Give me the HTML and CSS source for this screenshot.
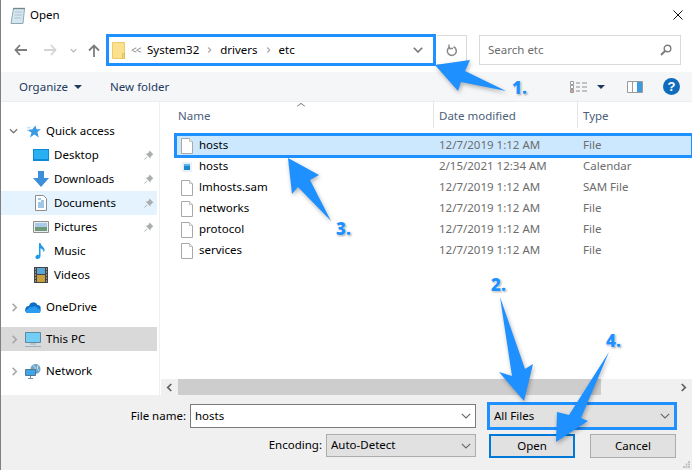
FILE: index.html
```html
<!DOCTYPE html>
<html lang="en">
<head>
  <meta charset="UTF-8">
  <title>Open</title>
  <link rel="stylesheet" href="styles.css">
</head>
<body>
  <svg class="defs" width="0" height="0">
    <symbol id="file" viewBox="0 0 12 16">
      <path d="M.5.5h8l3 3v12H.5z" fill="#fff" stroke="#a8a8a8"/>
      <path d="M8.5.5v3h3" fill="#f0f0f0" stroke="#c4c4c4"/>
    </symbol>
    <symbol id="pin" viewBox="0 0 10 10">
      <path d="M5.5.5l4 4-1.200.6-1.600 1.600-.3 1.800L1.700 3.800l1.800-.3L5 2z" fill="#a9adb0"/>
      <path d="M3 6.800L.5 9.500" stroke="#a9adb0" fill="none"/>
    </symbol>
    <symbol id="chev-right" viewBox="0 0 8 10">
      <path d="M2 1l4 4-4 4" fill="none" stroke="#a6a6a6" stroke-width="1.700"/>
    </symbol>
    <symbol id="chev-down" viewBox="0 0 10 6">
      <path d="M.8.8L5 5l4.200-4.200" fill="none" stroke="#666" stroke-width="1.100"/>
    </symbol>
  </svg>

  <div class="dialog">
    <header class="titlebar">
      <svg class="app-icon" width="16" height="17" viewBox="0 0 16 17">
        <path d="M3.500 1.500h11l-1.500 15H1z" fill="#d5e6ee" stroke="#8ea7b3"/>
        <path d="M5 5h7M4.700 8h7M4.400 11h7" stroke="#a9c4d2"/>
        <path d="M3.500 1.500h11" stroke="#59636b" stroke-width="1.500" stroke-dasharray="1 1"/>
      </svg>
      <span class="title">Open</span>
      <svg class="close" width="10" height="10" viewBox="0 0 10 10">
        <path d="M.5.500l9 9M9.500.500l-9 9" stroke="#111" fill="none"/>
      </svg>
    </header>

    <nav class="navbar">
      <svg class="nav-back" width="13" height="12" viewBox="0 0 13 12">
        <path d="M6 1L1.500 6 6 11M2 6h11" fill="none" stroke="#7d7d7d" stroke-width="1.800"/>
      </svg>
      <svg class="nav-forward" width="13" height="12" viewBox="0 0 13 12">
        <path d="M7 1l4.500 5L7 11M11 6H0" fill="none" stroke="#d4d4d4" stroke-width="1.800"/>
      </svg>
      <svg class="nav-recent" width="7" height="5" viewBox="0 0 10 6">
        <path d="M1 1l4 4 4-4" fill="none" stroke="#b5b5b5" stroke-width="1.800"/>
      </svg>
      <svg class="nav-up" width="12" height="13" viewBox="0 0 12 13">
        <path d="M1 6.500L6 1.500l5 5M6 2v11" fill="none" stroke="#7d7d7d" stroke-width="1.800"/>
      </svg>
      <div class="address marked">
        <svg width="13" height="17" viewBox="0 0 13 17">
          <path d="M.5.500h12v16H.5z" fill="#fbe08f" stroke="#eccb6d"/>
          <path d="M10.500 11.500h2v5h-2z" fill="#f7d878" stroke="#e3bd58"/>
        </svg>
        <span class="crumb-more">&lt;&lt;</span>
        <span class="crumb crumb-first">System32</span>
        <svg class="crumb-sep" width="5" height="8" viewBox="0 0 8 10"><use href="#chev-right"/></svg>
        <span class="crumb">drivers</span>
        <svg class="crumb-sep" width="5" height="8" viewBox="0 0 8 10"><use href="#chev-right"/></svg>
        <span class="crumb">etc</span>
        <svg class="address-drop" width="10" height="6" viewBox="0 0 10 6">
          <path d="M.8.800L5 5l4.200-4.200" fill="none" stroke="#777" stroke-width="1.600"/>
        </svg>
      </div>
      <div class="refresh">
        <svg width="12" height="13" viewBox="0 0 12 13">
          <path d="M7.500 2.800a4.500 4.500 0 1 1-3.600.1" fill="none" stroke="#8a8a8a" stroke-width="1.500"/>
          <path d="M3 .5v4h4" fill="none" stroke="#8a8a8a" stroke-width="1.300"/>
        </svg>
      </div>
      <div class="search">
        <span>Search etc</span>
        <svg width="12" height="12" viewBox="0 0 12 12">
          <circle cx="7.500" cy="4.500" r="3.300" fill="none" stroke="#7d7d7d" stroke-width="1.400"/>
          <path d="M5 7L1 11" stroke="#7d7d7d" stroke-width="2"/>
        </svg>
      </div>
    </nav>

    <div class="toolbar">
      <span class="tool">Organize</span>
      <span class="caret"></span>
      <span class="tool tool-new">New folder</span>
      <svg class="tool-views" width="19" height="12" viewBox="0 0 19 12">
        <path d="M.5.500h3v3h-3zM.5 4.500h3v3h-3zM.5 8.500h3v3h-3z" fill="#fff" stroke="#9a9a9a"/>
        <path d="M1 10h2" stroke="#c8402f"/>
        <path d="M6 2h4M12 2h5M6 6h4M12 6h5M6 10h4M12 10h5" stroke="#8f8f8f"/>
      </svg>
      <span class="caret caret-views"></span>
      <svg class="tool-pane" width="16" height="12" viewBox="0 0 16 12">
        <path d="M.5.500h15v11H.5z" fill="#fff" stroke="#9a9a9a"/>
        <path d="M5.500 1v10" stroke="#9a9a9a"/>
        <path d="M10 1h5v10h-5z" fill="#3c9be0"/>
      </svg>
      <svg class="tool-help" width="17" height="17" viewBox="0 0 17 17">
        <circle cx="8.500" cy="8.500" r="8.500" fill="#0f6cbd"/>
        <text x="8.500" y="13" class="help-mark">?</text>
      </svg>
    </div>

    <div class="main">
      <aside class="sidebar">
        <div class="side-row side-head">
          <svg class="expander" width="9" height="6" viewBox="0 0 10 6">
            <path d="M1 1l4 4 4-4" fill="none" stroke="#7a7a7a" stroke-width="1.500"/>
          </svg>
          <svg class="head-icon" width="14" height="13" viewBox="0 0 15 14">
            <path d="M9 .5l1.300 4.200H15l-3.800 2.900 1.400 5.900L8 10.300 3.200 13.500l1.600-5.400L0 5.500l5.800-.8z" fill="#3a9be4"/>
            <path d="M0 3h4M0 6h2" stroke="#9fd0f2"/>
          </svg>
          <span>Quick access</span>
        </div>
        <div class="side-row side-child">
          <svg width="16" height="12" viewBox="0 0 16 12">
            <path d="M0 0h16v12H0z" fill="#0c8ad8"/>
            <path d="M1 1h14v9H1z" fill="#29b0f2"/>
          </svg>
          <span>Desktop</span>
          <svg class="pin" width="10" height="10"><use href="#pin"/></svg>
        </div>
        <div class="side-row side-child">
          <svg width="16" height="16" viewBox="0 0 16 16">
            <path d="M5 0h6v7h5l-8 9-8-9h5z" fill="#3d8fdb"/>
          </svg>
          <span>Downloads</span>
          <svg class="pin" width="10" height="10"><use href="#pin"/></svg>
        </div>
        <div class="side-row side-child is-hover">
          <svg width="16" height="16" viewBox="0 0 16 16">
            <path d="M2.500.500h8l3 3v12h-11z" fill="#fff" stroke="#8c8c8c"/>
            <path d="M5 4h3M8 6h3M5 8h6M5 10h6M5 12h6" stroke="#3f8fd0"/>
          </svg>
          <span>Documents</span>
          <svg class="pin" width="10" height="10"><use href="#pin"/></svg>
        </div>
        <div class="side-row side-child">
          <svg width="16" height="12" viewBox="0 0 16 12">
            <path d="M.5.500h15v11H.5z" fill="#e8eef0" stroke="#8f8f8f"/>
            <path d="M2 2h12v4H2z" fill="#a9c9e6"/>
            <path d="M2 6h12v4H2z" fill="#6f9a7a"/>
          </svg>
          <span>Pictures</span>
          <svg class="pin" width="10" height="10"><use href="#pin"/></svg>
        </div>
        <div class="side-row side-child">
          <svg width="16" height="16" viewBox="0 0 16 16">
            <path d="M6 0h1.500c.3 3 3.500 3.500 4 6.500.2 1.200-.3 2-1 2.800.2-2.500-1.700-3.500-3-4V13c0 1.700-1.400 3-3.200 3C3 16 2.300 15 2.500 13.800 2.800 12.500 4.500 11.500 6 12z" fill="#1f9be8"/>
          </svg>
          <span>Music</span>
        </div>
        <div class="side-row side-child">
          <svg width="16" height="16" viewBox="0 0 16 16">
            <path d="M1 0h14v16H1z" fill="#444"/>
            <path d="M4 1h8v6H4z" fill="#5aa6d6"/>
            <path d="M4 8h8v7H4z" fill="#c8a13c"/>
            <path d="M2 2h1M2 5h1M2 8h1M2 11h1M2 14h1M13 2h1M13 5h1M13 8h1M13 11h1M13 14h1" stroke="#ddd"/>
          </svg>
          <span>Videos</span>
        </div>
        <div class="side-row side-section">
          <svg class="expander" width="7" height="9" viewBox="0 0 8 10"><use href="#chev-right"/></svg>
          <svg class="head-icon" width="16" height="11" viewBox="0 0 16 11">
            <path d="M4 4a4.500 4.500 0 0 1 8.500-1A3 3 0 0 1 15.500 7 3 3 0 0 1 13 11H3a3 3 0 0 1-2.500-4.500A3 3 0 0 1 4 4z" fill="#0f6fc6"/>
            <path d="M7 5.500a3.500 3.500 0 0 1 6 1.500 2 2 0 0 1 2.500 2A2 2 0 0 1 13 11H3a2 2 0 0 1 0-4 3 3 0 0 1 4-1.500z" fill="#2a9df0"/>
          </svg>
          <span>OneDrive</span>
        </div>
        <div class="side-row side-section is-selected">
          <svg class="expander" width="7" height="9" viewBox="0 0 8 10"><use href="#chev-right"/></svg>
          <svg class="head-icon" width="16" height="15" viewBox="0 0 16 15">
            <path d="M.5.500h15v10H.5z" fill="#74cdf5" stroke="#5f8aa5"/>
            <path d="M5 12h6" stroke="#9db0bd"/>
            <path d="M0 14.500h16" stroke="#9db0bd"/>
          </svg>
          <span>This PC</span>
        </div>
        <div class="side-row side-section">
          <svg class="expander" width="7" height="9" viewBox="0 0 8 10"><use href="#chev-right"/></svg>
          <svg class="head-icon" width="16" height="15" viewBox="0 0 16 15">
            <circle cx="10.500" cy="5" r="5" fill="#6fa5c8"/>
            <path d="M8 1.500c2 1 3 2.500 1 4.500M13 1.500c-1 2-1 4 1 5" stroke="#d6e6ef" fill="none"/>
            <path d="M.5 5.500h10v6H.5z" fill="#3da6e8" stroke="#56768f"/>
            <path d="M5.500 12v2M3 14.500h5" stroke="#7a8c99"/>
          </svg>
          <span>Network</span>
        </div>
      </aside>

      <section class="list">
        <div class="list-head">
          <span class="col col-name">Name<i class="sort-mark"></i></span>
          <span class="col col-date">Date modified</span>
          <span class="col col-type">Type</span>
        </div>
        <div class="list-rows">
          <div class="file-row marked-row">
            <span class="cell-name"><svg width="12" height="16"><use href="#file"/></svg>hosts</span>
            <span class="cell-date">12/7/2019 1:12 AM</span>
            <span class="cell-type">File</span>
          </div>
          <div class="file-row">
            <span class="cell-name">
              <svg width="12" height="16" viewBox="0 0 12 16">
                <path d="M1 3h10v10H1z" fill="#e9f1f6"/>
                <path d="M3 5h6v6H3z" fill="#1b87cf"/>
                <path d="M3 5h6v2H3z" fill="#5db4ea"/>
              </svg>hosts</span>
            <span class="cell-date">2/15/2021 12:34 AM</span>
            <span class="cell-type">Calendar</span>
          </div>
          <div class="file-row">
            <span class="cell-name"><svg width="12" height="16"><use href="#file"/></svg>lmhosts.sam</span>
            <span class="cell-date">12/7/2019 1:12 AM</span>
            <span class="cell-type">SAM File</span>
          </div>
          <div class="file-row">
            <span class="cell-name"><svg width="12" height="16"><use href="#file"/></svg>networks</span>
            <span class="cell-date">12/7/2019 1:12 AM</span>
            <span class="cell-type">File</span>
          </div>
          <div class="file-row">
            <span class="cell-name"><svg width="12" height="16"><use href="#file"/></svg>protocol</span>
            <span class="cell-date">12/7/2019 1:12 AM</span>
            <span class="cell-type">File</span>
          </div>
          <div class="file-row">
            <span class="cell-name"><svg width="12" height="16"><use href="#file"/></svg>services</span>
            <span class="cell-date">12/7/2019 1:12 AM</span>
            <span class="cell-type">File</span>
          </div>
        </div>
        <div class="hscroll">
          <span class="hscroll-btn">
            <svg width="7" height="9" viewBox="0 0 8 10"><path d="M6 1L2 5l4 4" fill="none" stroke="#606060" stroke-width="2"/></svg>
          </span>
          <span class="hscroll-thumb"></span>
          <span class="hscroll-btn hscroll-end">
            <svg width="7" height="9" viewBox="0 0 8 10"><path d="M2 1l4 4-4 4" fill="none" stroke="#606060" stroke-width="2"/></svg>
          </span>
        </div>
      </section>
    </div>

    <footer class="footer">
      <label class="field-label">File name:</label>
      <div class="combo combo-input">
        <span>hosts</span>
        <svg width="10" height="6"><use href="#chev-down"/></svg>
      </div>
      <div class="combo combo-select marked">
        <span>All Files</span>
        <svg width="10" height="6"><use href="#chev-down"/></svg>
      </div>
      <div class="encoding">
        <label class="field-label">Encoding:</label>
        <div class="combo combo-encoding">
          <span>Auto-Detect</span>
          <svg width="10" height="6"><use href="#chev-down"/></svg>
        </div>
      </div>
      <div class="actions">
        <button class="btn btn-default">Open</button>
        <button class="btn">Cancel</button>
      </div>
      <svg class="grip" width="7" height="7" viewBox="0 0 7 7">
        <path d="M5 0h2v2H5zM2.500 2.500h2v2h-2zM5 2.500h2v2H5zM0 5h2v2H0zM2.500 5h2v2h-2zM5 5h2v2H5z" fill="#c4c4c4"/>
      </svg>
    </footer>
  </div>

  <!-- tutorial marks drawn over the dialog -->
  <svg class="marks" width="692" height="470" viewBox="0 0 692 470">
    <path d="M435 65L470 60 465 71 506 91 461 82 458 91z"/>
    <path d="M500 297L525 369 533 364 524 401 499 372 512 376z"/>
    <path d="M288 158L319 175 310 180 331 221 298 187 292 194z"/>
    <path d="M609 352L581 418 588 421 556 442 557 412 569 415z"/>
  </svg>
  <span class="step step-1">1.</span>
  <span class="step step-2">2.</span>
  <span class="step step-3">3.</span>
  <span class="step step-4">4.</span>
</body>
</html>
```

FILE: styles.css
```css
* {
  box-sizing: border-box;
}

body {
  margin: 0;
  width: 692px;
  height: 470px;
  overflow: hidden;
  position: relative;
  background: #fff;
  font-family: "Noto Sans", "Open Sans", sans-serif;
  font-size: 11.5px;
  color: #000;
}

svg {
  flex: none;
  display: block;
}

.defs {
  position: absolute;
}

.dialog {
  width: 692px;
  height: 470px;
  border-left: 1px solid #808080;
  display: flex;
  flex-direction: column;
}

/* title bar */
.titlebar {
  height: 30px;
  display: flex;
  align-items: center;
  padding: 0 9px;
}

.title {
  margin-left: 4px;
  padding-bottom: 2px;
}

.close {
  margin-left: auto;
}

/* nav row */
.navbar {
  height: 42px;
  display: flex;
  align-items: center;
  padding-bottom: 2px;
}

.nav-back {
  margin-left: 13px;
}

.nav-forward {
  margin-left: 17px;
}

.nav-recent {
  margin-left: 13px;
}

.nav-up {
  margin-left: 11px;
}

.address {
  width: 326px;
  height: 28px;
  margin-left: 8px;
  display: flex;
  align-items: center;
  padding-left: 4px;
}

.marked {
  outline: 3px solid #1e90ff;
  outline-offset: -1px;
}

.crumb-more {
  width: 8px;
  margin-left: 6px;
  color: #8a8a8a;
  font-size: 10px;
  letter-spacing: -1px;
}

.crumb {
  margin-left: 7px;
  padding-bottom: 2px;
}

.crumb-first {
  margin-left: 8px;
}

.crumb-sep {
  margin-left: 8px;
  margin-right: 1px;
}

.address-drop {
  margin-left: auto;
  margin-right: 11px;
}

.refresh {
  width: 30px;
  height: 30px;
  margin-left: 3px;
  border: 1px solid #d9d9d9;
  border-left: none;
  display: flex;
  align-items: center;
  justify-content: center;
}

.search {
  width: 202px;
  height: 30px;
  margin-left: 12px;
  border: 1px solid #d9d9d9;
  display: flex;
  align-items: center;
  justify-content: space-between;
  padding: 0 8px;
  color: #6d6d6d;
}

.search span {
  padding-bottom: 2px;
}

/* toolbar */
.toolbar {
  height: 30px;
  background: #f5f6f7;
  border-bottom: 1px solid #ededed;
  display: flex;
  align-items: center;
  color: #1e3a5f;
}

.tool {
  margin-left: 18px;
}

.tool-new {
  margin-left: 28px;
}

.caret {
  width: 0;
  height: 0;
  margin-left: 6px;
  border: 4px solid transparent;
  border-top-color: #1e3a5f;
  border-bottom: none;
}

.tool-views {
  margin-left: auto;
}

.caret-views {
  margin-left: 8px;
}

.tool-pane {
  margin-left: 22px;
}

.tool-help {
  margin-left: 20px;
  margin-right: 12px;
}

.help-mark {
  font: bold 13px "Liberation Sans", sans-serif;
  fill: #fff;
  text-anchor: middle;
}

/* sidebar and list */
.main {
  height: 293px;
  display: flex;
}

.sidebar {
  width: 159px;
  padding: 17px 2px 0 0;
  border-right: 1px solid #f0f0f0;
}

.side-row {
  height: 24px;
  display: flex;
  align-items: center;
}

.side-row span {
  padding-bottom: 2px;
}

.side-head .expander,
.side-section .expander {
  margin-left: 8px;
  width: 9px;
}

.side-head .head-icon {
  margin-left: 9px;
  margin-right: 5px;
}

.side-section .expander {
  margin-left: 9px;
}

.side-section {
  margin-top: 8px;
}

.side-section .head-icon {
  margin-left: 6px;
  margin-right: 5px;
}

.side-child {
  padding-left: 32px;
}

.side-child > svg:first-child {
  width: 16px;
  margin-right: 5px;
}

.pin {
  margin-left: auto;
  margin-right: 3px;
}

.is-hover {
  background: #e5f3ff;
}

.is-selected {
  background: #d9d9d9;
}

.list {
  flex: 1;
  min-width: 0;
  display: flex;
  flex-direction: column;
}

.list-head {
  height: 26px;
  display: grid;
  grid-template-columns: 273px 144px 1fr;
  color: #4c607a;
}

.col {
  display: flex;
  align-items: center;
  padding-left: 5px;
  border-left: 1px solid #e5e5e5;
  position: relative;
}

.col-name {
  padding-left: 18px;
  border-left: none;
}

.sort-mark {
  position: absolute;
  left: 138px;
  top: 1px;
  width: 6px;
  height: 6px;
  border-left: 1px solid #7a7a7a;
  border-top: 1px solid #7a7a7a;
  transform: scaleY(.7) rotate(45deg);
}

.list-rows {
  flex: 1;
  padding-top: 7px;
  padding-left: 16px;
}

.file-row {
  height: 21px;
  display: grid;
  grid-template-columns: 257px 144px 1fr;
  align-items: center;
  color: #6d6d6d;
}

.marked-row {
  background: #cce8ff;
  outline: 3px solid #1e90ff;
  outline-offset: -1px;
}

.cell-name {
  display: flex;
  align-items: center;
  gap: 6px;
  padding-left: 5px;
  padding-bottom: 2px;
  color: #000;
}

.cell-name svg {
  margin-top: 2px;
}

.cell-date,
.cell-type {
  padding-left: 6px;
  padding-bottom: 2px;
}

.hscroll {
  height: 16px;
  margin-left: 1px;
  background: #f0f0f0;
  display: flex;
}

.hscroll-btn {
  width: 17px;
  display: flex;
  align-items: center;
  justify-content: center;
}

.hscroll-thumb {
  width: 423px;
  background: #cdcdcd;
}

.hscroll-end {
  margin-left: auto;
}

/* bottom form */
.footer {
  flex: 1;
  background: #f0f0f0;
  padding: 9px 0 0 0;
  display: grid;
  grid-template-columns: 189px 286px 201px;
  grid-template-rows: 24px 24px;
  row-gap: 6px;
  align-content: start;
  position: relative;
}

.field-label {
  text-align: right;
  align-self: center;
  padding-right: 4px;
  padding-bottom: 2px;
}

.combo {
  display: flex;
  align-items: center;
  justify-content: space-between;
  padding: 0 4px 0 4px;
}

.combo span {
  padding-bottom: 2px;
}

.combo-input {
  background: #fff;
  border: 1px solid #7a7a7a;
}

.combo-select {
  width: 186px;
  margin-left: 13px;
  background: #e1e1e1;
  padding: 0 5px;
}

.encoding {
  grid-column: 1 / 3;
  display: flex;
  justify-content: flex-end;
  align-items: flex-start;
}

.encoding .field-label {
  margin-top: 3px;
  align-self: flex-start;
}

.combo-encoding {
  width: 150px;
  height: 23px;
  background: #e1e1e1;
  border: 1px solid #adadad;
}

.actions {
  display: flex;
  justify-content: space-between;
  padding-left: 13px;
  padding-right: 1px;
}

.btn {
  width: 86px;
  height: 24px;
  padding: 0 0 2px;
  background: #e1e1e1;
  border: 1px solid #adadad;
  border-radius: 0;
  font: inherit;
  color: #000;
}

.btn-default {
  border: 2px solid #0078d7;
}

.grip {
  position: absolute;
  right: 2px;
  bottom: 2px;
}

/* numbered arrows */
.marks {
  position: absolute;
  left: 0;
  top: 0;
  fill: #1e90ff;
  filter: drop-shadow(1px 2px 2px rgba(0, 0, 0, .3));
}

.step {
  position: absolute;
  font: 800 17px "Open Sans", sans-serif;
  color: #1e90ff;
  text-shadow: 0 0 1px #fff, 0 0 2px #fff, 0 0 2px #fff, 1px 1px 2px rgba(0, 0, 0, .5);
}

.step-1 {
  left: 512px;
  top: 76px;
}

.step-2 {
  left: 491px;
  top: 273px;
}

.step-3 {
  left: 336px;
  top: 217px;
}

.step-4 {
  left: 606px;
  top: 329px;
}
```
